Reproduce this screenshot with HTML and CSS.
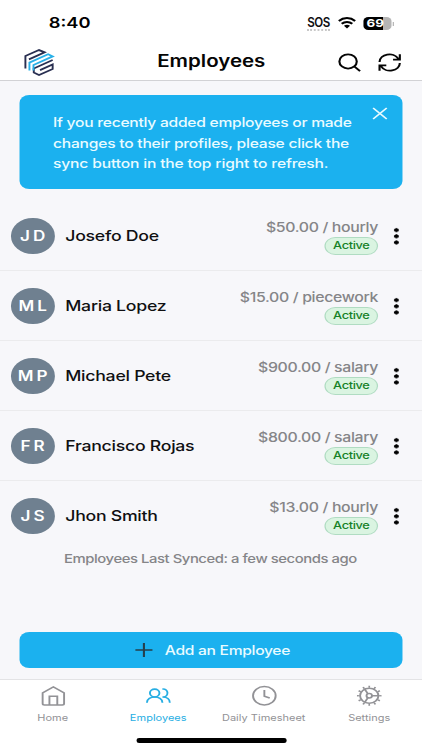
FILE: index.html
```html
<!DOCTYPE html>
<html lang="en">
<head>
<meta charset="utf-8">
<title>Employees</title>
<link rel="stylesheet" href="styles.css">
</head>
<body>
<div class="phone">
  <header class="top">
    <div class="status">
      <span class="time">8:40</span>
      <div class="signals">
        <span class="sos">SOS</span>
        <svg class="wifi" viewBox="0 0 18 13" preserveAspectRatio="none"><path d="M1 4.400C5.600.2 12.400.2 17 4.400M3.800 7.600c3-2.700 7.400-2.700 10.400 0" fill="none" stroke="#000" stroke-width="2.300"/><path d="M6 10c1.800-1.500 4.200-1.500 6 0l-3 3z"/></svg>
        <span class="battery">69</span>
      </div>
    </div>
    <div class="nav">
      <svg class="logo" viewBox="0 0 29 27" preserveAspectRatio="none" fill="none" stroke-width="1.900">
        <g stroke="#292f51"><path d="M1 19.500V7L14.500 1l5.500 2.300L4.500 10.300"/><path d="M28 11L9.300 19.500v4L14.500 26 28 20v-4.500l-12.500 5.700"/></g>
        <g stroke="#28b0e8"><path d="M5 21.500V13.700L23.500 5.200l4.500 2.200L9 16v5.500"/></g>
      </svg>
      <h1>Employees</h1>
      <div class="actions">
        <svg viewBox="0 0 24 24"><circle cx="10.600" cy="10.600" r="9"/><path d="M17 17l6 6"/></svg>
        <svg viewBox="0 0 24 24"><path d="M1.500 11.500C1.500 1.500 16-2.500 21 7.500M22.500 1.500v7h-7M22.500 12.500c0 10-14.500 14-19.500 4M1.500 22.500v-7h7"/></svg>
      </div>
    </div>
  </header>

  <main>
    <div class="banner">
      <p><span class="l1">If you recently added employees or made</span><br><span class="l2">changes to their profiles, please click the</span><br><span class="l3">sync button in the top right to refresh.</span></p>
      <svg class="close" viewBox="0 0 14 14"><path d="M1 1l12 12M13 1L1 13"/></svg>
    </div>
    <ul class="list">
      <li><span class="avatar">JD</span><span class="name">Josefo Doe</span><div class="pay"><span>$50.00 / hourly</span><b>Active</b></div><i class="dots"></i></li>
      <li><span class="avatar">ML</span><span class="name">Maria Lopez</span><div class="pay"><span>$15.00 / piecework</span><b>Active</b></div><i class="dots"></i></li>
      <li><span class="avatar">MP</span><span class="name">Michael Pete</span><div class="pay"><span>$900.00 / salary</span><b>Active</b></div><i class="dots"></i></li>
      <li><span class="avatar">FR</span><span class="name">Francisco Rojas</span><div class="pay"><span>$800.00 / salary</span><b>Active</b></div><i class="dots"></i></li>
      <li><span class="avatar">JS</span><span class="name">Jhon Smith</span><div class="pay"><span>$13.00 / hourly</span><b>Active</b></div><i class="dots"></i></li>
    </ul>
    <p class="synced">Employees Last Synced: a few seconds ago</p>
    <button class="add"><svg viewBox="0 0 14 14"><path d="M7 0v14M0 7h14"/></svg><span>Add an Employee</span></button>
  </main>

  <footer>
    <nav class="tabs">
      <a><svg viewBox="0 0 22 22"><path d="M2 8L11 2l9 6v11q0 1.500-1.500 1.500h-15Q2 20.500 2 19zM7.700 20.500V11.500h6.600v9"/></svg><span>Home</span></a>
      <a class="on"><svg viewBox="0 0 22 22"><circle cx="8" cy="8.200" r="4"/><path d="M1.500 18.200c0-7.900 13-7.900 13 0M14.500 4.200c5.500-.5 5.500 7.500.8 8M14.500 12.200c4 0 6.200 2.500 6.200 6"/></svg><span>Employees</span></a>
      <a><svg viewBox="0 0 22 22"><circle cx="11" cy="11" r="9.500"/><path d="M11 5v6.500l4.500 1.700"/></svg><span>Daily Timesheet</span></a>
      <a><svg viewBox="0 0 22 22"><circle cx="11" cy="11" r="7.700"/><circle cx="11" cy="11" r="2.300"/><path d="M13.300 11h5.400M9.900 9L7.200 4.300M9.900 13l-2.700 4.700"/><circle class="teeth" cx="11" cy="11" r="9.200" pathLength="120"/></svg><span>Settings</span></a>
    </nav>
    <div class="home-bar"></div>
  </footer>
</div>
</body>
</html>
```
FILE: styles.css
```css
* { box-sizing: border-box; }
body { margin: 0; overflow: hidden; background: #fff; }
.phone {
  width: 346px; height: 750px;
  display: flex; flex-direction: column;
  transform: scaleX(1.21965); transform-origin: 0 0;
  font-family: Inter, "Liberation Sans", sans-serif;
  background: #f7f7fa; color: #101012;
}
svg { display: block; overflow: visible; }
h1, p, ul { margin: 0; padding: 0; }

.top { height: 81px; background: #fff; border-bottom: 1px solid #d2d2d5; }
.status { height: 44px; padding: 13px 25.500px 0 40px; display: flex; justify-content: space-between; }
.time { font-size: 15px; line-height: 20px; font-weight: 600; color: #000; }
.signals { display: flex; align-items: flex-start; padding-top: 3.500px; }
.sos { width: 24px; margin-right: -5.500px; height: 14px; font-size: 12.500px; line-height: 11px; font-weight: 600; letter-spacing: -.6px; border-bottom: 2px dotted #c8c8c8; transform: scaleX(.76); transform-origin: 0 0; }
.wifi { width: 15px; height: 11.500px; margin: 0 6.500px 0 6.500px; }
.battery {
  position: relative; width: 22.500px; height: 13px; border-radius: 4px; padding-right: 3px;
  background: linear-gradient(90deg, #000 70%, #b5b5b5 70%);
  color: #fff; font-size: 11px; line-height: 13px; font-weight: 700; text-align: center;
}
.battery::after { content: ""; position: absolute; right: -2px; top: 5px; width: 1px; height: 4px; background: #b5b5b5; }
.nav { height: 36px; padding: 0 17.500px 0 20px; display: grid; grid-template-columns: 52px 1fr 52px; align-items: center; }
.logo { width: 24px; height: 27px; }
h1 { font-size: 16.800px; line-height: 24px; font-weight: 600; text-align: center; color: #050505; margin: -2px 0 0 -2px; }
.actions { display: flex; gap: 14px; }
.actions svg { width: 19px; height: 19px; fill: none; stroke: #050505; stroke-width: 2.200; flex: none; }

main { height: 598px; padding-top: 13.500px; display: flex; flex-direction: column; }
.banner { height: 94.500px; margin: 0 16px 11.500px; padding: 18.500px 0 0 27.500px; position: relative; border-radius: 8px; background: #1bb1ef; color: #e9fbff; font-size: 12.800px; line-height: 20.500px; font-weight: 450; white-space: nowrap; }
.l1 { letter-spacing: -.21px; }
.l2 { letter-spacing: -.19px; }
.l3 { letter-spacing: -.13px; }
.close { position: absolute; right: 12.500px; top: 12px; width: 13px; height: 13px; stroke: #e9fbff; stroke-width: 1.600; }
.list { list-style: none; }
.list li { height: 70px; padding: 0 19.500px 0 9px; display: flex; align-items: center; border-bottom: 1px solid #ebebed; }
.list li:last-child { border-color: transparent; }
.avatar { width: 35.500px; height: 35.500px; margin-top: 2px; border-radius: 50%; background: #6f8090; color: #fff; font-size: 14px; line-height: 35.500px; font-weight: 600; letter-spacing: 2.500px; text-indent: 2.500px; text-align: center; }
.name { margin: 1.500px 0 0 9px; font-size: 14.500px; font-weight: 500; letter-spacing: -.22px; }
.pay { margin-left: auto; display: flex; flex-direction: column; align-items: flex-end; color: #858588; font-size: 13px; font-weight: 450; letter-spacing: -.28px; line-height: 18px; padding-top: 3px; }
.pay b { width: 44px; height: 17.500px; margin-top: 1px; border: 1px solid #b0dcc2; border-radius: 9px; background: #daf4e1; color: #168128; font-size: 10.500px; line-height: 16px; font-weight: 550; letter-spacing: -.3px; text-align: center; }
.dots { width: 4px; height: 18px; margin-top: 1px; margin-left: 13px; margin-right: -.5px; background: radial-gradient(circle at 50% 50%, #000 1.700px, transparent 2.100px) 0 0 / 4px 6.200px; }
.synced { padding-left: 52.500px; margin-top: -1px; font-size: 12.200px; line-height: 18px; letter-spacing: -.37px; font-weight: 450; color: #858588; }
.add { height: 36px; margin: auto 16px 11px; padding: 0 0 0 3px; border: 0; border-radius: 8px; background: #1bb1ef; color: #e9fbff; display: flex; align-items: center; justify-content: center; gap: 10px; font: 500 12.800px/20px Inter, sans-serif; letter-spacing: -.25px; }
.add svg { width: 14px; height: 14px; stroke: #263f4b; stroke-width: 1.700; }
.add span { padding-top: 1px; }

footer { height: 71px; background: #fff; border-top: 1px solid #e3e3e5; }
.tabs { height: 58px; display: grid; grid-template-columns: repeat(4, 1fr); }
.tabs a { display: flex; flex-direction: column; align-items: center; padding-top: 5px; color: #929296; font-size: 9px; line-height: 12px; letter-spacing: .02px; }
.tabs svg { width: 21.500px; height: 21.500px; margin-bottom: 5.500px; fill: none; stroke: currentColor; stroke-width: 1.600; }
.tabs .on { color: #27aee3; }
.tabs .teeth { stroke-width: 2.200; stroke-dasharray: 3 7; stroke-dashoffset: 1.500; }
.home-bar { width: 123px; height: 4.500px; margin: 0 auto; border-radius: 2px; background: #000; }
```
